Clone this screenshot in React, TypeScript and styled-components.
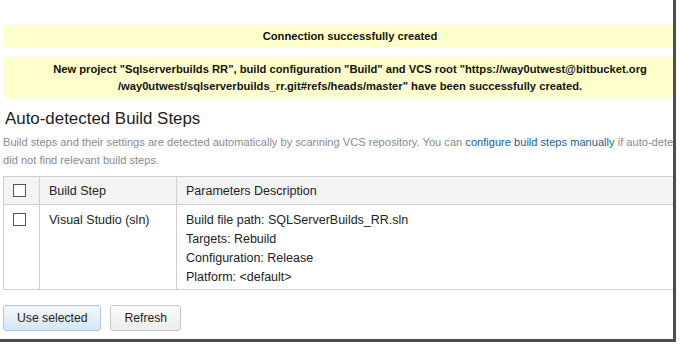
import React from "react";
import styled, { createGlobalStyle } from "styled-components";

const Global = createGlobalStyle`
  html, body { margin: 0; padding: 0; background: #ffffff; }
  body { font-family: "Liberation Sans", Arial, sans-serif; }
`;

const Frame = styled.div`
  width: 673px;
  height: 339px;
  overflow: hidden;
  border-right: 3px solid #4d4d4d;
  border-bottom: 3px solid #4d4d4d;
  background: #fff;
`;

const Content = styled.div`
  width: 760px;
  padding: 25px 0 0 3px;
  display: flex;
  flex-direction: column;
`;

const Message = styled.div<{ $lines: number }>`
  background: #ffffcc;
  width: 694px;
  height: ${(p) => (p.$lines === 1 ? 22 : 41)}px;
  display: flex;
  flex-direction: column;
  justify-content: center;
  align-items: center;
  font-weight: bold;
  font-size: 11.2px;
  line-height: 17px;
  color: #111;
  margin-bottom: 10px;
`;

const Line = styled.div`
  white-space: nowrap;
`;

const Heading = styled.h2`
  margin: 0;
  font-weight: normal;
  font-size: 16.9px;
  line-height: 22px;
  color: #222;
  padding-left: 2px;
`;

const Desc = styled.div`
  font-size: 11.1px;
  line-height: 18px;
  color: #8a8a8a;
  margin-top: 3px;
`;

const Link = styled.a`
  color: #2a5a8f;
  text-decoration: none;
`;

const Table = styled.div`
  margin-top: 7px;
  width: 740px;
  border: 1px solid #cfcfcf;
  display: grid;
  grid-template-columns: 35px 137px 1fr;
  font-size: 12.5px;
  color: #222;
`;

const HeadCell = styled.div<{ $first?: boolean }>`
  background: #f4f4f4;
  height: 27px;
  display: flex;
  align-items: center;
  padding-left: 9px;
  border-left: ${(p) => (p.$first ? "none" : "1px solid #cfcfcf")};
  border-bottom: 1px solid #cfcfcf;
`;

const BodyCell = styled.div<{ $first?: boolean }>`
  height: 84px;
  display: flex;
  flex-direction: column;
  align-items: flex-start;
  padding: 6px 0 0 9px;
  box-sizing: border-box;
  border-left: ${(p) => (p.$first ? "none" : "1px solid #cfcfcf")};
  line-height: 19px;
`;

const Box = styled.span<{ $top?: number }>`
  display: inline-block;
  width: 11px;
  height: 11px;
  border: 1px solid #555;
  background: #fff;
  margin-top: ${(p) => p.$top ?? 0}px;
`;

const Buttons = styled.div`
  display: flex;
  gap: 9px;
  margin-top: 15px;
`;

const Button = styled.button<{ $primary?: boolean }>`
  font-family: inherit;
  font-size: 12.2px;
  color: #222;
  height: 26px;
  padding: 0 13px;
  border-radius: 3px;
  border: 1px solid ${(p) => (p.$primary ? "#b5c9dc" : "#c9c9c9")};
  background: ${(p) =>
    p.$primary
      ? "linear-gradient(#f2f8fd, #d6e7f6)"
      : "linear-gradient(#fbfbfb, #ececec)"};
`;

export default function App() {
  return (
    <>
      <Global />
      <Frame>
        <Content>
          <Message $lines={1}>
            <Line>Connection successfully created</Line>
          </Message>
          <Message $lines={2}>
            <Line>
              New project "Sqlserverbuilds RR", build configuration "Build" and VCS root "https://way0utwest@bitbucket.org
            </Line>
            <Line>/way0utwest/sqlserverbuilds_rr.git#refs/heads/master" have been successfully created.</Line>
          </Message>
          <Heading>Auto-detected Build Steps</Heading>
          <Desc>
            <Line>
              Build steps and their settings are detected automatically by scanning VCS repository. You can{" "}
              <Link href="#">configure build steps manually</Link> if auto-detected
            </Line>
            <Line>did not find relevant build steps.</Line>
          </Desc>
          <Table>
            <HeadCell $first>
              <Box />
            </HeadCell>
            <HeadCell>Build Step</HeadCell>
            <HeadCell>Parameters Description</HeadCell>
            <BodyCell $first>
              <Box $top={2} />
            </BodyCell>
            <BodyCell>Visual Studio (sln)</BodyCell>
            <BodyCell>
              <div>Build file path: SQLServerBuilds_RR.sln</div>
              <div>Targets: Rebuild</div>
              <div>Configuration: Release</div>
              <div>Platform: &lt;default&gt;</div>
            </BodyCell>
          </Table>
          <Buttons>
            <Button $primary>Use selected</Button>
            <Button>Refresh</Button>
          </Buttons>
        </Content>
      </Frame>
    </>
  );
}
